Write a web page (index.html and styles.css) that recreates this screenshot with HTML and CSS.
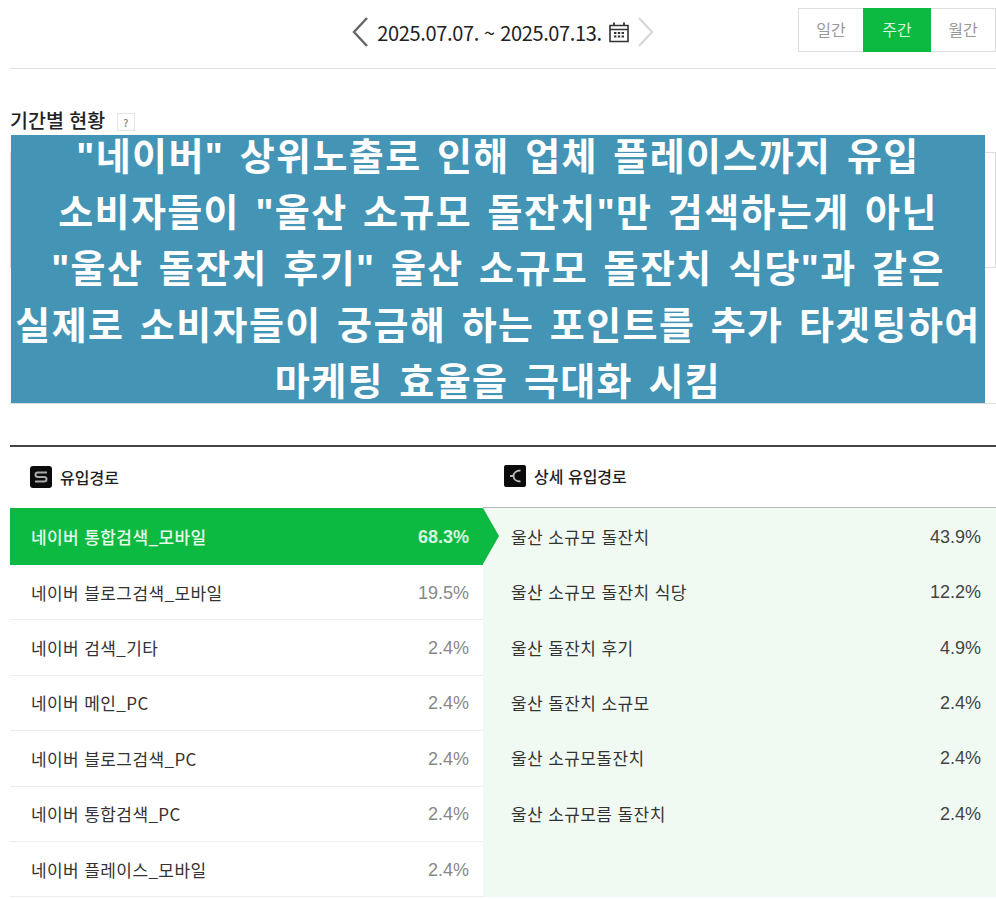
FILE: index.html
```html
<!DOCTYPE html>
<html lang="ko">
<head>
  <meta charset="UTF-8" />
  <meta name="viewport" content="width=device-width, initial-scale=1.0"/>
  <title>유입경로</title>
  <link rel="stylesheet" href="styles.css">
</head>
<body>
  <header class="topbar">
    <div class="date-nav">
      <svg class="arrow" width="18" height="32" viewBox="0 0 18 32"><path d="M16 2 L3 16 L16 30" fill="none" stroke="#666" stroke-width="2.4"/></svg>
      <span class="date-text">2025.07.07. ~ 2025.07.13.</span>
      <svg class="cal" width="20" height="22" viewBox="0 0 20 22">
        <path d="M1 4.5H19V20.5H1Z M1 8.5H19" fill="none" stroke="#333" stroke-width="1.6"/>
        <path d="M5 1.5V5 M15 1.5V5" stroke="#333" stroke-width="1.8"/>
        <path d="M5 11h2.4v2H5z M8.8 11h2.4v2H8.8z M12.6 11h2.4v2h-2.4z M5 14.6h2.4v2H5z M8.8 14.6h2.4v2H8.8z M12.6 14.6h2.4v2h-2.4z" fill="#333"/>
      </svg>
      <svg class="arrow" width="18" height="32" viewBox="0 0 18 32"><path d="M2 2 L15 16 L2 30" fill="none" stroke="#d9d9d9" stroke-width="2.4"/></svg>
    </div>
    <div class="tabs">
      <a class="tab">일간</a>
      <a class="tab active">주간</a>
      <a class="tab">월간</a>
    </div>
  </header>

  <section class="period">
    <h2>기간별 현황 <span class="help">?</span></h2>
    <div class="period-box"></div>
    <div class="period-box second"></div>
  </section>

  <div class="notice">
    <div>"네이버" 상위노출로 인해 업체 플레이스까지 유입</div>
    <div>소비자들이 "울산 소규모 돌잔치"만 검색하는게 아닌</div>
    <div>"울산 돌잔치 후기" 울산 소규모 돌잔치 식당"과 같은</div>
    <div>실제로 소비자들이 궁금해 하는 포인트를 추가 타겟팅하여</div>
    <div>마케팅 효율을 극대화 시킴</div>
  </div>

  <section class="traffic">
    <div class="traffic-col left">
      <h3>
        <svg width="22" height="22" viewBox="0 0 22 22"><rect width="22" height="22" rx="3" fill="#0b0b0b"/><path d="M17 6.5H8Q5.5 6.500 5.500 8.750T8 11H14Q16.500 11 16.500 13.250T14 15.500H5" fill="none" stroke="#aaa" stroke-width="2"/></svg>
        유입경로
      </h3>
      <ul class="rows">
        <li class="selected"><span>네이버 통합검색_모바일</span><b>68.3%</b></li>
        <li><span>네이버 블로그검색_모바일</span><b>19.5%</b></li>
        <li><span>네이버 검색_기타</span><b>2.4%</b></li>
        <li><span>네이버 메인_PC</span><b>2.4%</b></li>
        <li><span>네이버 블로그검색_PC</span><b>2.4%</b></li>
        <li><span>네이버 통합검색_PC</span><b>2.4%</b></li>
        <li><span>네이버 플레이스_모바일</span><b>2.4%</b></li>
      </ul>
    </div>
    <div class="traffic-col right">
      <h3>
        <svg width="22" height="22" viewBox="0 0 22 22"><rect width="22" height="22" rx="2" fill="#0b0b0b"/><path d="M16.500 5.500C12 5.500 9.500 8 9.500 11S12 16.500 16.500 16.500 M6 11H9.500" fill="none" stroke="#bbb" stroke-width="1.800"/></svg>
        상세 유입경로
      </h3>
      <ul class="rows detail">
        <li><span>울산 소규모 돌잔치</span><b>43.9%</b></li>
        <li><span>울산 소규모 돌잔치 식당</span><b>12.2%</b></li>
        <li><span>울산 돌잔치 후기</span><b>4.9%</b></li>
        <li><span>울산 돌잔치 소규모</span><b>2.4%</b></li>
        <li><span>울산 소규모돌잔치</span><b>2.4%</b></li>
        <li><span>울산 소규모름 돌잔치</span><b>2.4%</b></li>
      </ul>
    </div>
  </section>
</body>
</html>
```

FILE: styles.css
```css
body {
  margin: 0;
  padding-left: 10px;
  height: 899px;
  overflow: hidden;
  background: #fff;
  font-family: "Noto Sans CJK KR", "Noto Sans", sans-serif;
  color: #333;
}

/* top date bar */
.topbar {
  height: 68px;
  display: grid;
  grid-template-columns: 1fr auto 1fr;
  align-items: start;
  border-bottom: 1px solid #e2e2e2;
}
.date-nav {
  grid-column: 2;
  display: flex;
  align-items: center;
  gap: 8px;
  height: 64px;
}
.date-text {
  font-size: 20px;
  letter-spacing: -0.35px;
  color: #222;
}
.cal { margin-left: -1px; }
.tabs {
  grid-column: 3;
  justify-self: end;
  display: flex;
  margin-top: 8px;
  border: 1px solid #ddd;
  height: 42px;
}
.tab {
  width: 64px;
  line-height: 40px;
  text-align: center;
  font-size: 16px;
  color: #999;
}
.tab.active {
  width: 68px;
  margin: -1px 0;
  line-height: 42px;
  height: 44px;
  background: #0cba42;
  color: #d8f5df;
}

/* period stats, mostly under the notice */
.period { padding-top: 38px; }
.period h2 {
  margin: 0;
  height: 45px;
  font-size: 19.5px;
  line-height: 26px;
  font-weight: 500;
  color: #222;
}
.help {
  display: inline-block;
  width: 16px;
  height: 16px;
  margin-left: 6px;
  border: 1px solid #e4e4e4;
  font-size: 11px;
  line-height: 16px;
  text-align: center;
  color: #888;
  vertical-align: 1px;
}
.period-box {
  height: 114px;
  border: 1px solid #ddd;
}
.period-box.second {
  height: 135px;
  border-width: 0 0 1px;
}

.notice {
  position: absolute;
  left: 11px;
  top: 135px;
  box-sizing: border-box;
  width: 974px;
  height: 268px;
  padding-top: 2px;
  display: flex;
  flex-direction: column;
  gap: 16.2px;
  background: #4495b5;
  color: #fff;
  font-family: "Liberation Sans", "Noto Sans CJK KR", sans-serif;
  font-size: 38px;
  font-weight: 700;
  line-height: 40px;
  letter-spacing: 1.4px;
  word-spacing: 3.5px;
  text-align: center;
  white-space: nowrap;
}

/* traffic tables */
.traffic {
  margin-top: 41px;
  display: grid;
  grid-template-columns: 473px 1fr;
  border-top: 2px solid #444;
}
.traffic h3 {
  margin: 0;
  height: 58px;
  padding-bottom: 2px;
  display: flex;
  align-items: center;
  gap: 8px;
  font-size: 16px;
  font-weight: 500;
  color: #222;
}
.left h3 {
  height: 59px;
  padding-left: 20px;
}
.right h3 {
  padding-left: 21px;
  border-bottom: 1px solid #bbb;
}
.rows {
  list-style: none;
  margin: 0;
  padding: 0;
}
.rows li {
  height: 54.4px;
  display: flex;
  align-items: center;
  justify-content: space-between;
  padding: 0 14px 0 21px;
  border-bottom: 1px solid #eee;
  font-size: 17px;
  letter-spacing: 0.4px;
  color: #333;
}
.rows b {
  padding-top: 2px;
  font-family: "Liberation Sans", sans-serif;
  font-size: 18px;
  font-weight: 400;
  letter-spacing: 0;
  color: #888;
}
.rows li.selected {
  position: relative;
  height: 57px;
  background: #0cba42;
  border-bottom: 0;
  color: #e6f9ea;
  font-weight: 500;
}
.rows li.selected b {
  font-weight: 700;
  color: #d8f5df;
}
.rows li.selected::after {
  content: "";
  position: absolute;
  left: 100%;
  top: 0;
  border-left: 16px solid #0cba42;
  border-top: 28.5px solid transparent;
  border-bottom: 28.5px solid transparent;
}
.detail {
  height: 389px;
  background: #f0faf3;
}
.detail li {
  border-bottom: 0;
  height: 55.4px;
  padding: 0 15px 0 28px;
}
.detail li:first-child { height: 56px; }
.detail b { color: #444; }
```
